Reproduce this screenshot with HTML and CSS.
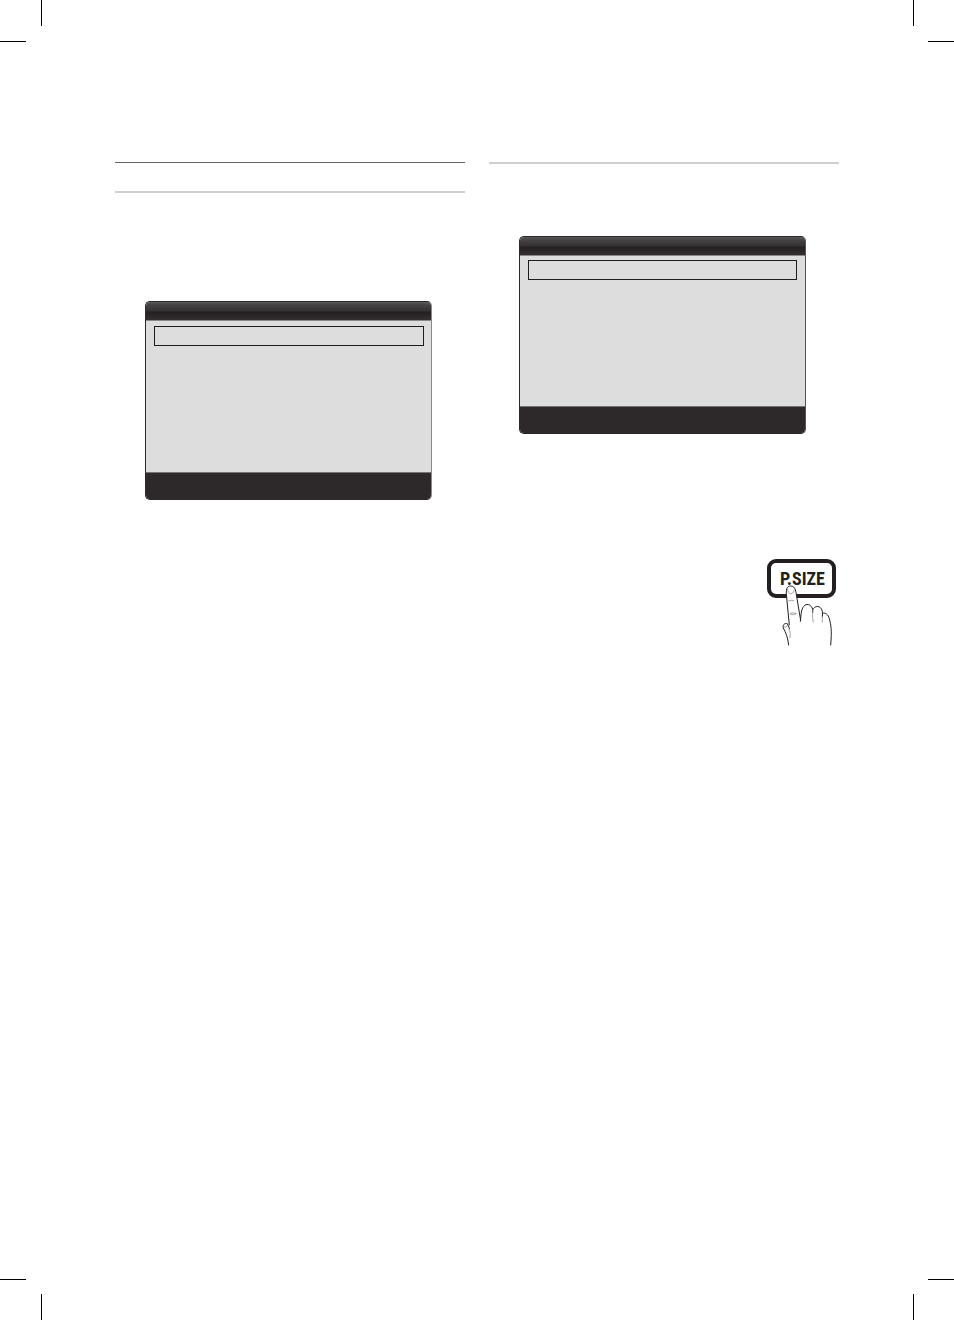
FILE: index.html
```html
<!DOCTYPE html>
<html lang="en">
<head>
<meta charset="utf-8">
<title>P.SIZE</title>
<link rel="stylesheet" href="styles.css">
</head>
<body>
<div class="sheet">
  <header class="marks">
    <svg class="mark" viewBox="0 0 42 42" aria-hidden="true"><path d="M41.5 0V26M0 41.5H26"/></svg>
    <svg class="mark" viewBox="0 0 42 42" aria-hidden="true"><path d="M1.5 0V26M16 41.5H42"/></svg>
  </header>
  <main class="columns">
    <section class="column">
      <hr class="rule rule-dark">
      <hr class="rule rule-light rule-second">
      <div class="screen screen-low">
        <div class="screen-title"></div>
        <div class="screen-body"><div class="selection"></div></div>
        <div class="screen-foot"></div>
      </div>
    </section>
    <section class="column">
      <hr class="rule rule-light">
      <div class="screen screen-high">
        <div class="screen-title"></div>
        <div class="screen-body"><div class="selection"></div></div>
        <div class="screen-foot"></div>
      </div>
      <div class="press">
        <button class="key" type="button">P.SIZE</button>
        <svg class="hand" viewBox="36 27 207 261" aria-hidden="true">
          <path class="skin" d="M101 286C100 265 92 248 85 234C82 224 90 219 97 221L104 237L94 132C93 114 98 108 107 108C117 108 121 116 123 128L137 211L140 182C143 168 151 162 159 163C167 164 171 170 173 179C179 169 188 167 195 172C200 176 202 182 202 190C212 187 220 194 223 206C228 225 230 240 227 286Z"/>
          <path class="line" d="M101 286C99 263 92 247 85 234C82 225 88 219 97 221L104 237M103 226L94 132C93 114 98 108 107 108C117 108 121 116 123 128L137 211M136 215C138 198 138 181 144 172C150 162 162 160 169 170C173 175 174 180 173 188M173 179C179 169 188 167 195 172C203 178 203 188 202 200M202 190C212 187 220 194 223 206C228 225 231 240 227 286"/>
          <path class="detail" d="M98 117C98 135 115 136 117 120M100 153Q109 149 117 152M105 190Q114 186 124 191Q116 196 106 193M102 235Q108 251 105 264M87 231Q94 232 99 225M173 188Q171 204 175 217M202 200V217"/>
        </svg>
      </div>
    </section>
  </main>
  <footer class="marks">
    <svg class="mark" viewBox="0 0 42 42" aria-hidden="true"><path d="M0 1.5H26M41.5 16V42"/></svg>
    <svg class="mark" viewBox="0 0 42 42" aria-hidden="true"><path d="M16 1.5H42M1.5 16V42"/></svg>
  </footer>
</div>
</body>
</html>
```
FILE: styles.css
```css
* { box-sizing: border-box; }
body { margin: 0; background: #fff; font-family: "Liberation Sans", Arial, sans-serif; }
.sheet { min-height: 100vh; display: flex; flex-direction: column; }
.marks { display: flex; justify-content: space-between; }
.mark { display: block; width: 42px; height: 42px; fill: none; stroke: #000; stroke-width: 1; }
.columns { flex: 1; display: grid; grid-template-columns: 1fr 1fr; gap: 24px; padding: 120px 115px 0; }
.column { display: flex; flex-direction: column; }
.rule { width: 100%; margin: 0; border: 0; }
.rule-dark { height: 1px; background: #636264; }
.rule-light { height: 2px; background: #d0d0d0; }
.rule-second { margin-top: 28px; }
.screen {
  margin: 0 33px 0 30px;
  border: 1px solid #2d292a;
  border-right-color: #8b898a;
  border-radius: 5px;
  overflow: hidden;
  background: #ddd;
}
.screen-low { margin-top: 108px; }
.screen-high { margin-top: 72px; border-right-color: #555354; }
.screen-title {
  height: 19px;
  border-bottom: 1px solid #8b8586;
  background: linear-gradient(#5b595a 0, #454344 3px, #353132 9px, #242021 10px, #332e30 18px);
}
.screen-body { height: 151px; padding: 5px 7px 0 8px; }
.screen-high .screen-body { height: 150px; padding: 4px 8px 0; }
.selection { height: 20px; border: 1px solid #1f1c1d; }
.screen-foot { height: 27px; border-top: 1px solid #777374; background: #2d292a; }
.press { position: relative; align-self: flex-end; margin: 125px 3px 0 0; width: 69px; height: 87px; }
.key {
  display: flex;
  align-items: center;
  justify-content: center;
  width: 100%;
  height: 39px;
  padding: 0 0 0 2px;
  border: 4px solid #231f20;
  border-radius: 9px;
  background: #fff;
  color: #231f20;
  font: bold 18px "Liberation Sans Narrow", "Arial Narrow", "Roboto Condensed", "Liberation Sans", sans-serif;
}
.hand { position: absolute; inset: 0; width: 100%; height: 100%; pointer-events: none; }
.skin { fill: #fff; }
.line { fill: none; stroke: #231f20; stroke-width: 3; stroke-linejoin: round; }
.detail { fill: none; stroke: #777; stroke-width: 2; }
```
